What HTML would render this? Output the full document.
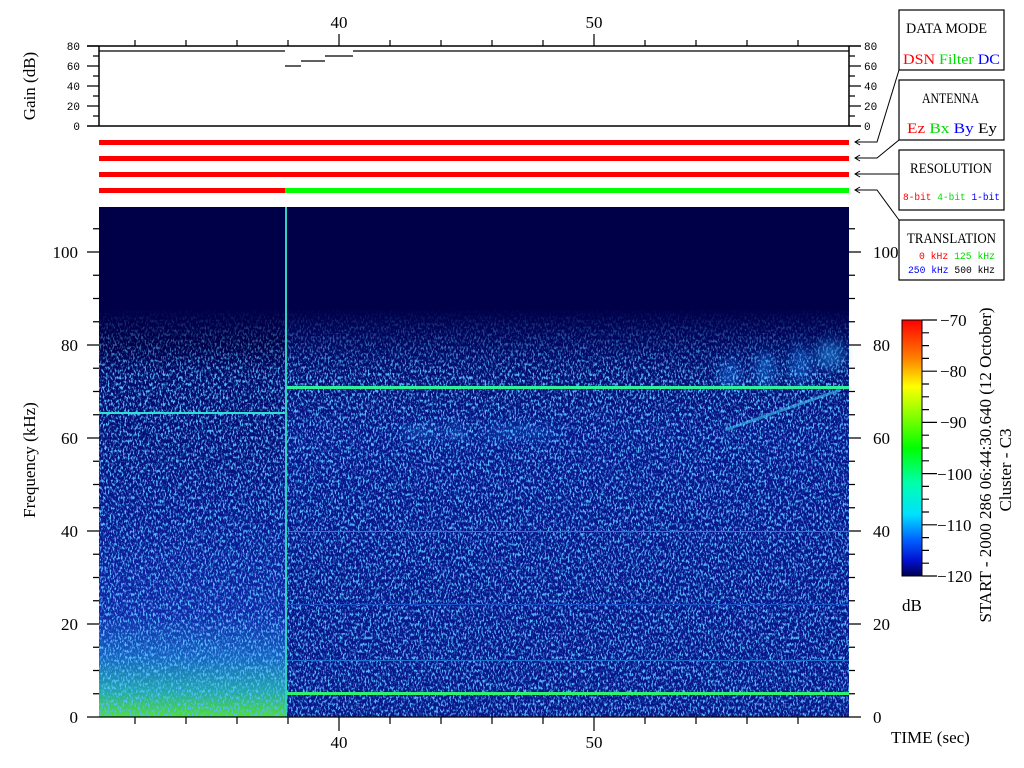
<!DOCTYPE html>
<html><head><meta charset="utf-8"><style>
html,body{margin:0;padding:0;background:#fff;width:1024px;height:768px;overflow:hidden}
svg{display:block}
.t{font-family:"Liberation Serif",serif;font-size:17px;fill:#000}
.m{font-family:"Liberation Mono",monospace;font-size:11px;fill:#000}
.s{font-family:"Liberation Serif",serif;font-size:15px}
.mm{font-family:"Liberation Mono",monospace;font-size:10px}
</style></head><body>
<svg width="1024" height="768" viewBox="0 0 1024 768" xmlns="http://www.w3.org/2000/svg">
<defs>
<linearGradient id="gl" x1="0" y1="0" x2="0" y2="1">
<stop offset="0" stop-color="#000048"/>
<stop offset="0.27" stop-color="#000048"/>
<stop offset="0.33" stop-color="#030a68"/>
<stop offset="0.6" stop-color="#08168c"/>
<stop offset="0.8" stop-color="#1028a8"/>
<stop offset="0.88" stop-color="#1660c0"/>
<stop offset="0.95" stop-color="#20a8a8"/>
<stop offset="1" stop-color="#50e030"/>
</linearGradient>
<linearGradient id="gr" x1="0" y1="0" x2="0" y2="1">
<stop offset="0" stop-color="#000048"/>
<stop offset="0.2" stop-color="#000048"/>
<stop offset="0.3" stop-color="#030c6c"/>
<stop offset="0.45" stop-color="#08168c"/>
<stop offset="1" stop-color="#08168a"/>
</linearGradient>
<linearGradient id="cb" x1="0" y1="0" x2="0" y2="1">
<stop offset="0" stop-color="#ff0000"/>
<stop offset="0.15" stop-color="#ff8000"/>
<stop offset="0.26" stop-color="#ffff00"/>
<stop offset="0.38" stop-color="#80ff00"/>
<stop offset="0.5" stop-color="#00ff00"/>
<stop offset="0.64" stop-color="#00ffb0"/>
<stop offset="0.76" stop-color="#00e0ff"/>
<stop offset="0.86" stop-color="#0060ff"/>
<stop offset="0.94" stop-color="#0010d0"/>
<stop offset="1" stop-color="#000050"/>
</linearGradient>
<linearGradient id="fm" x1="0" y1="0" x2="0" y2="1">
<stop offset="0" stop-color="#fff" stop-opacity="0"/>
<stop offset="0.2" stop-color="#fff" stop-opacity="0"/>
<stop offset="0.33" stop-color="#fff" stop-opacity="1"/>
<stop offset="1" stop-color="#fff" stop-opacity="1"/>
</linearGradient>
<mask id="mk"><rect x="99" y="207" width="750" height="510" fill="url(#fm)"/></mask>
<filter id="nz" x="0" y="0" width="100%" height="100%">
<feTurbulence type="fractalNoise" baseFrequency="0.6 0.3" numOctaves="2" seed="7"/>
<feColorMatrix type="matrix" values="0 0 0 0 0.1  0 0 0 0 0.5  0 0 0 0 1  5 0 0 0 -2.45"/>
</filter>
<filter id="bl"><feGaussianBlur stdDeviation="6"/></filter>
</defs>

<rect x="99" y="46" width="750" height="80" fill="#fff"/>
<path d="M87 46H861M99 46V126M87 126H861M849 46V126" stroke="#000" stroke-width="1.5" fill="none"/>
<path d="M99 51H285M285 66H301M301 61H325M325 56H353M353 51H849" stroke="#000" stroke-width="1.2" fill="none"/>
<path d="M87 46H99M93 56H99M87 66H99M93 76H99M87 86H99M93 96H99M87 106H99M93 116H99M849 56H855M849 66H861M849 76H855M849 86H861M849 96H855M849 106H861M849 116H855M135 40V46M186 40V46M237 40V46M288 40V46M390 40V46M441 40V46M492 40V46M543 40V46M645 40V46M696 40V46M747 40V46M798 40V46M339 34V46M594 34V46" stroke="#000" stroke-width="1.2"/>
<text class="m" x="80" y="50" text-anchor="end">80</text>
<text class="m" x="80" y="70" text-anchor="end">60</text>
<text class="m" x="80" y="90" text-anchor="end">40</text>
<text class="m" x="80" y="110" text-anchor="end">20</text>
<text class="m" x="80" y="130" text-anchor="end">0</text>
<text class="m" x="864" y="50">80</text>
<text class="m" x="864" y="70">60</text>
<text class="m" x="864" y="90">40</text>
<text class="m" x="864" y="110">20</text>
<text class="m" x="864" y="130">0</text>
<text class="t" x="339" y="28" text-anchor="middle">40</text>
<text class="t" x="594" y="28" text-anchor="middle">50</text>
<text class="t" transform="translate(35,86) rotate(-90)" text-anchor="middle">Gain (dB)</text>

<rect x="99" y="140" width="750" height="5" fill="#ff0000"/>
<rect x="99" y="156" width="750" height="5" fill="#ff0000"/>
<rect x="99" y="172" width="750" height="5" fill="#ff0000"/>
<rect x="99" y="188" width="186" height="5" fill="#ff0000"/>
<rect x="285" y="188" width="564" height="5" fill="#00ff00"/>

<path d="M855 142H877L899 70M855 158H877L899 140M855 174H899M855 190H877L899 220M860 139L855 142L860 145M860 155L855 158L860 161M860 171L855 174L860 177M860 187L855 190L860 193" stroke="#000" stroke-width="1" fill="none"/>

<g fill="#fff" stroke="#000" stroke-width="1.2">
<rect x="899" y="10" width="105" height="60"/>
<rect x="899" y="80" width="105" height="60"/>
<rect x="899" y="150" width="105" height="60"/>
<rect x="899" y="220" width="105" height="60"/>
</g>
<text class="s" x="906" y="33" textLength="81" lengthAdjust="spacingAndGlyphs">DATA MODE</text>
<text class="s" x="903" y="64" textLength="97" lengthAdjust="spacingAndGlyphs"><tspan fill="#ff0000">DSN</tspan> <tspan fill="#00dd00">Filter</tspan> <tspan fill="#0000ff">DC</tspan></text>
<text class="s" x="922" y="103" textLength="57" lengthAdjust="spacingAndGlyphs">ANTENNA</text>
<text class="s" x="907" y="133" textLength="90" lengthAdjust="spacingAndGlyphs"><tspan fill="#ff0000">Ez</tspan>  <tspan fill="#00dd00">Bx</tspan>  <tspan fill="#0000ff">By</tspan>  <tspan>Ey</tspan></text>
<text class="s" x="910" y="173" textLength="82" lengthAdjust="spacingAndGlyphs">RESOLUTION</text>
<text class="mm" x="903" y="200" textLength="97" lengthAdjust="spacingAndGlyphs"><tspan fill="#ff0000">8-bit</tspan> <tspan fill="#00dd00">4-bit</tspan> <tspan fill="#0000ff">1-bit</tspan></text>
<text class="s" x="907" y="243" textLength="89" lengthAdjust="spacingAndGlyphs">TRANSLATION</text>
<text class="mm" x="919" y="259" textLength="76" lengthAdjust="spacingAndGlyphs"><tspan fill="#ff0000">0 kHz</tspan> <tspan fill="#00dd00">125 kHz</tspan></text>
<text class="mm" x="908" y="273" textLength="87" lengthAdjust="spacingAndGlyphs"><tspan fill="#0000ff">250 kHz</tspan> <tspan fill="#000">500 kHz</tspan></text>

<rect x="99" y="207" width="187" height="510" fill="url(#gl)"/>
<rect x="286" y="207" width="563" height="510" fill="url(#gr)"/>
<g filter="url(#bl)" opacity="0.55">
<ellipse cx="830" cy="355" rx="14" ry="14" fill="#2090e0"/>
<ellipse cx="800" cy="365" rx="10" ry="18" fill="#1878e0"/>
<ellipse cx="765" cy="370" rx="10" ry="18" fill="#1878e0"/>
<ellipse cx="730" cy="375" rx="10" ry="16" fill="#1870e0"/>
<ellipse cx="420" cy="432" rx="18" ry="4" fill="#2090e0"/>
<ellipse cx="455" cy="432" rx="12" ry="4" fill="#2090e0"/>
<ellipse cx="520" cy="432" rx="40" ry="4" fill="#1870d8"/>
</g>
<path d="M725 430L840 390" stroke="#30b0e0" stroke-width="3" opacity="0.7"/>
<rect x="99" y="207" width="750" height="510" filter="url(#nz)" mask="url(#mk)"/>
<rect x="99" y="412" width="187" height="2" fill="#30e0d0"/>
<rect x="285" y="207" width="2" height="510" fill="#30d0c0"/>
<rect x="287" y="386" width="562" height="3" fill="#30f0a0"/>
<rect x="287" y="692" width="562" height="3" fill="#30f070"/>
<rect x="287" y="531" width="562" height="1" fill="#2080d0"/>
<rect x="287" y="660" width="562" height="1" fill="#2070d0"/>
<rect x="287" y="604" width="562" height="1" fill="#1850c8"/>

<path d="M87 717H99M93 693.75H99M93 670.5H99M93 647.25H99M87 624H99M93 600.75H99M93 577.5H99M93 554.25H99M87 531H99M93 507.75H99M93 484.5H99M93 461.25H99M87 438H99M93 414.75H99M93 391.5H99M93 368.25H99M87 345H99M93 321.75H99M93 298.5H99M93 275.25H99M87 252H99M93 228.75H99M849 717H861M849 693.75H855M849 670.5H855M849 647.25H855M849 624H861M849 600.75H855M849 577.5H855M849 554.25H855M849 531H861M849 507.75H855M849 484.5H855M849 461.25H855M849 438H861M849 414.75H855M849 391.5H855M849 368.25H855M849 345H861M849 321.75H855M849 298.5H855M849 275.25H855M849 252H861M849 228.75H855M87 717H849M135 717V724M186 717V724M237 717V724M288 717V724M390 717V724M441 717V724M492 717V724M543 717V724M645 717V724M696 717V724M747 717V724M798 717V724M339 717V731M594 717V731" stroke="#000" stroke-width="1.2"/>
<g class="t">
<text x="78" y="723" text-anchor="end">0</text>
<text x="78" y="630" text-anchor="end">20</text>
<text x="78" y="537" text-anchor="end">40</text>
<text x="78" y="444" text-anchor="end">60</text>
<text x="78" y="351" text-anchor="end">80</text>
<text x="78" y="258" text-anchor="end">100</text>
<text x="873" y="723">0</text>
<text x="873" y="630">20</text>
<text x="873" y="537">40</text>
<text x="873" y="444">60</text>
<text x="873" y="351">80</text>
<text x="873" y="258">100</text>
<text x="339" y="748" text-anchor="middle">40</text>
<text x="594" y="748" text-anchor="middle">50</text>
<text x="891" y="743">TIME (sec)</text>
<text x="902" y="611">dB</text>
</g>
<text class="t" transform="translate(35,460) rotate(-90)" text-anchor="middle">Frequency (kHz)</text>

<rect x="902" y="320" width="20" height="256" fill="url(#cb)" stroke="#000" stroke-width="1"/>
<path d="M922 320H937M922 332.8H929M922 345.6H929M922 358.4H929M922 371.2H937M922 384H929M922 396.8H929M922 409.6H929M922 422.4H937M922 435.2H929M922 448H929M922 460.8H929M922 473.6H937M922 486.4H929M922 499.2H929M922 512H929M922 524.8H937M922 537.6H929M922 550.4H929M922 563.2H929M922 576H937" stroke="#000" stroke-width="1.2"/>
<g class="t">
<text x="940" y="326">−70</text>
<text x="940" y="377">−80</text>
<text x="940" y="428">−90</text>
<text x="937" y="480">−100</text>
<text x="937" y="531">−110</text>
<text x="937" y="582">−120</text>
</g>
<text class="t" transform="translate(991,465) rotate(-90)" text-anchor="middle">START - 2000 286 06:44:30.640 (12 October)</text>
<text class="t" transform="translate(1011,470) rotate(-90)" text-anchor="middle">Cluster - C3</text>
</svg>
</body></html>
